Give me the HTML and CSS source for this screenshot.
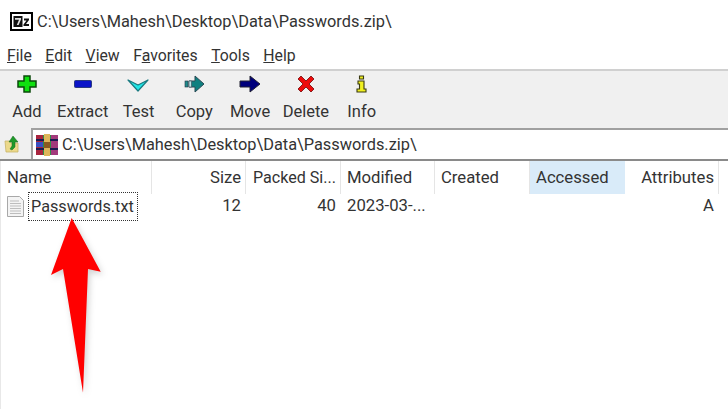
FILE: index.html
```html
<!DOCTYPE html>
<html lang="en">
<head>
<meta charset="utf-8">
<title>Passwords.zip</title>
<link rel="stylesheet" href="styles.css">
</head>
<body>
<div class="app">
  <header class="titlebar">
    <svg class="logo" width="23" height="19" viewBox="0 0 23 19"><rect x="1" y="1" width="21" height="17" fill="#fff" stroke="#000" stroke-width="2"/><rect x="3.500" y="4" width="9" height="11" fill="#111"/><path d="M5 6h6v1.600L8.600 13H6.800L9 7.800H5z" fill="#ddd"/><path d="M14 6.500h5v1.400l-3 4h3V14h-5.500v-1.400l3-4H14z" fill="#111"/></svg>
    <span class="title">C:\Users\Mahesh\Desktop\Data\Passwords.zip\</span>
  </header>
  <nav class="menubar">
    <span class="menu"><u>F</u>ile</span>
    <span class="menu"><u>E</u>dit</span>
    <span class="menu"><u>V</u>iew</span>
    <span class="menu">F<u>a</u>vorites</span>
    <span class="menu"><u>T</u>ools</span>
    <span class="menu"><u>H</u>elp</span>
  </nav>
  <div class="toolbar">
    <div class="tool">
      <svg width="20" height="22" viewBox="0 0 20 22"><path d="M7 2h6v5h6v6h-6v5H7v-5H1V7h6z" fill="#10e010" stroke="#0a4a0a" stroke-width="1.500"/></svg>
      <span>Add</span>
    </div>
    <div class="tool">
      <svg width="20" height="22" viewBox="0 0 20 22"><rect x="1.500" y="6.500" width="17" height="7" rx="1" fill="#0a14c8" stroke="#2a3a80"/></svg>
      <span>Extract</span>
    </div>
    <div class="tool">
      <svg width="22" height="22" viewBox="0 0 22 22"><path d="M1 6l10 5 10-5-10 11z" fill="#22e6e6" stroke="#1a7a80" stroke-width="1.200" stroke-linejoin="round"/></svg>
      <span>Test</span>
    </div>
    <div class="tool">
      <svg width="22" height="22" viewBox="0 0 22 22"><rect x="2" y="7" width="3" height="6" fill="#1f8a8a" stroke="#234" stroke-width=".6"/><path d="M6 7h6V2l9 8-9 8v-5H6z" fill="#0f8080" stroke="#2a4a55"/><rect x="6" y="7" width="2.500" height="6" fill="#bfe6e6" stroke="#345" stroke-width=".6"/></svg>
      <span>Copy</span>
    </div>
    <div class="tool">
      <svg width="22" height="22" viewBox="0 0 22 22"><path d="M1 7h10V2l10 8-10 8v-5H1z" fill="#00007c" stroke="#223"/></svg>
      <span>Move</span>
    </div>
    <div class="tool">
      <svg width="20" height="22" viewBox="0 0 20 22"><path d="M2 5l3-3 5 5 5-5 3 3-5 5 5 5-3 3-5-5-5 5-3-3 5-5z" fill="#ee0c0c" stroke="#8a2020"/></svg>
      <span>Delete</span>
    </div>
    <div class="tool">
      <svg width="16" height="22" viewBox="0 0 16 22"><path d="M5.500 2h4v3h-4zM4 7h6v8h2v3H3v-3h2.500v-5H4z" fill="#f0f020" stroke="#3a3a10" stroke-width="1.100"/></svg>
      <span>Info</span>
    </div>
  </div>
  <div class="addressbar">
    <div class="upbtn">
      <svg width="16" height="18" viewBox="0 0 16 18"><path d="M1 6h5l1 2h7v9H2z" fill="#ecd98a" stroke="#c8b46a" stroke-width=".8"/><path d="M9 1l5 6h-3v5l-3 3-2-1 2-3V7H5z" fill="#1f9a2a" stroke="#17671d" stroke-width=".5"/></svg>
    </div>
    <div class="pathbox">
      <svg width="24" height="22" viewBox="0 0 24 22"><rect x="1" y="1" width="22" height="20" fill="#3a3f9a"/><rect x="1" y="1" width="7" height="20" fill="#a8253f"/><rect x="8" y="1" width="8" height="20" fill="#2f8f46"/><rect x="16" y="1" width="7" height="20" fill="#a23a7c"/><rect x="1" y="5" width="22" height="2" fill="#1b1b50"/><rect x="1" y="14" width="22" height="2" fill="#1b1b50"/><rect x="9" y="0" width="6" height="22" fill="#dfb65a"/><rect x="9" y="8" width="6" height="6" fill="#8a5a20"/><rect x="1" y="8" width="7" height="5" fill="#3a4fc0"/></svg>
      <span class="path">C:\Users\Mahesh\Desktop\Data\Passwords.zip\</span>
    </div>
  </div>
  <section class="list">
    <div class="row head">
      <div class="cell sep">Name</div>
      <div class="cell sep right">Size</div>
      <div class="cell sep right packed">Packed Si...</div>
      <div class="cell sep">Modified</div>
      <div class="cell sep">Created</div>
      <div class="cell active">Accessed</div>
      <div class="cell sep right">Attributes</div>
    </div>
    <div class="row item">
      <div class="cell namecell">
        <svg width="17" height="21" viewBox="0 0 17 21"><path d="M.500.500h12l4 4v16H.500z" fill="#f4f4f4" stroke="#a8a8a8"/><path d="M3 5h9M3 7.500h11M3 10h11M3 12.500h11M3 15h11M3 17.500h11" stroke="#bdbdbd"/></svg>
        <span class="focus">Passwords.txt</span>
      </div>
      <div class="cell right">12</div>
      <div class="cell right">40</div>
      <div class="cell">2023-03-...</div>
      <div class="cell"></div>
      <div class="cell"></div>
      <div class="cell right">A</div>
    </div>
    <svg class="arrow" width="60" height="180" viewBox="0 0 60 180"><path d="M22.700 0L51.700 53.700 39 51 34 174.700 14 51 2 57z" fill="#ff0000"/></svg>
  </section>
</div>
</body>
</html>
```

FILE: styles.css
```css
* { box-sizing: border-box; }
html, body { margin: 0; padding: 0; }
body {
  width: 728px;
  height: 409px;
  overflow: hidden;
  background: #fff;
  color: #222;
  font-family: Roboto, "Open Sans", "Liberation Sans", sans-serif;
  font-size: 16.350px;
}
.app { display: flex; flex-direction: column; height: 409px; }

.titlebar {
  height: 42px;
  display: flex;
  align-items: center;
  gap: 4px;
  padding: 0 0 0 10px;
}
.logo { flex: none; }
.title { color: #333; }

.menubar {
  height: 27px;
  display: flex;
  gap: 13.500px;
  padding: 0 0 0 7px;
  align-items: center;
  font-size: 15.800px;
  color: #333;
}

.toolbar {
  height: 59px;
  display: flex;
  margin-left: -1px;
  background: #f0f0f0;
  border-top: 2px solid #d0d0d0;
}
.tool {
  width: 55.800px;
  display: flex;
  flex-direction: column;
  align-items: center;
  padding-top: 3px;
  gap: 3px;
  font-size: 16.500px;
  color: #333;
}
.tool span { line-height: 26px; }

.addressbar {
  height: 33px;
  display: flex;
  background: #f0f0f0;
  border-bottom: 2px solid #8a8a8a;
}
.upbtn {
  width: 31px;
  display: flex;
  align-items: center;
  padding-left: 4px;
}
.pathbox {
  flex: 1;
  display: flex;
  align-items: center;
  gap: 3px;
  padding-left: 2px;
  background: #fff;
  border-top: 2px solid #a0a0a0;
  border-left: 2px solid #a0a0a0;
}
.path { color: #333; }

.list { position: relative; flex: 1; border-left: 1px solid #e8e8e8; }
.row {
  display: grid;
  grid-template-columns: 151px 94px 95px 94px 95px 95px 94px;
  font-size: 16.700px;
  color: #333;
}
.head { height: 30px; }
.head .cell { line-height: 33px; padding: 0 4px 0 6px; white-space: nowrap; }
.head .packed { font-size: 16.100px; }
.sep { border-right: 1px solid #e5e5e5; margin-bottom: 1px; }
.active { background: #d9ebf9; margin-bottom: 1px; }
.right { text-align: right; }
.item { height: 30px; }
.item .cell { line-height: 29px; padding: 0 5px 0 6px; }
.item .namecell {
  display: flex;
  align-items: center;
  gap: 4px;
  padding: 0 0 0 6px;
  font-size: 16.200px;
}
.focus {
  border: 1px dotted #333;
  padding: 0 3px 0 2px;
  line-height: 27px;
  height: 29px;
}
.arrow { position: absolute; left: 48px; top: 57px; filter: drop-shadow(2px 3px 3px rgba(0,0,0,.18)); }
```
